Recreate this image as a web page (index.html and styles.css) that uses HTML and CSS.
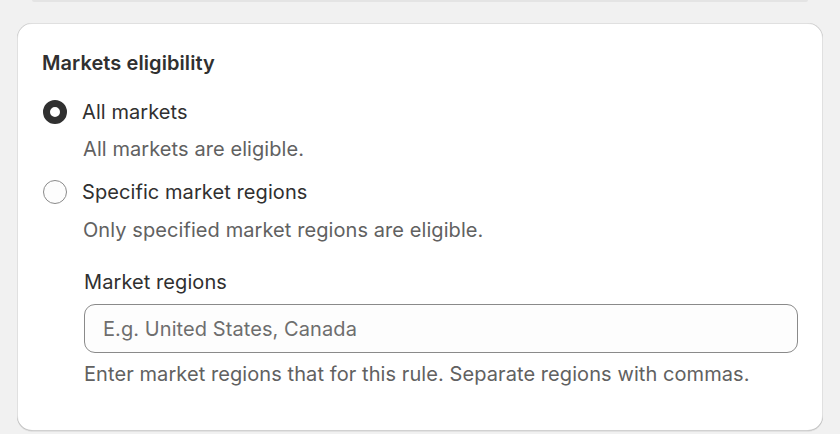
FILE: index.html
```html
<!DOCTYPE html>
<html lang="en">
<head>
<meta charset="utf-8">
<title>Markets eligibility</title>
<link rel="stylesheet" href="styles.css">
</head>
<body>
<div class="prev-edge"></div>
<section class="card">
  <h2 class="card-title">Markets eligibility</h2>
  <div class="choice-list">
    <label class="choice">
      <span class="radio radio-checked"></span>
      <span class="choice-label">All markets</span>
    </label>
    <p class="choice-help">All markets are eligible.</p>
    <label class="choice choice-second">
      <span class="radio"></span>
      <span class="choice-label">Specific market regions</span>
    </label>
    <p class="choice-help choice-help-second">Only specified market regions are eligible.</p>
  </div>
  <div class="field">
    <div class="field-label">Market regions</div>
    <div class="input"><span class="placeholder">E.g. United States, Canada</span></div>
    <p class="field-help">Enter market regions that for this rule. Separate regions with commas.</p>
  </div>
</section>
</body>
</html>
```

FILE: styles.css
```css
* { box-sizing: border-box; }
html, body { margin: 0; padding: 0; }
body {
  background: #f1f1f1;
  font-family: Inter, "Noto Sans", sans-serif;
  font-weight: 400;
  letter-spacing: 0.08px;
  color: #303030;
  width: 840px;
  height: 434px;
  overflow: hidden;
}
.prev-edge {
  height: 2px;
  margin: 0 32px;
  background: #e4e4e4;
  border-radius: 0 0 6px 6px;
}
.card {
  margin: 21px 17px 0;
  height: 408px;
  background: #ffffff;
  border-radius: 15px;
  padding: 26px 25px 0;
  box-shadow:
    0 1px 0 0 rgba(26,26,26,0.07),
    inset 0 -1px 0 0 rgba(0,0,0,0.18),
    inset 1px 0 0 0 rgba(0,0,0,0.12),
    inset -1px 0 0 0 rgba(0,0,0,0.12),
    inset 0 1px 0 0 rgba(204,204,204,0.6);
}
.card-title {
  margin: 0;
  font-size: 20px;
  font-weight: 600;
  line-height: 28px;
  color: #303030;
}
.choice-list {
  margin-top: 21px;
  display: flex;
  flex-direction: column;
}
.choice {
  display: flex;
  align-items: center;
  gap: 15px;
  height: 28px;
  padding-left: 1px;
}
.choice-second { margin-top: 15px; }
.choice-label {
  font-size: 20px;
  line-height: 28px;
  color: #303030;
}
.radio {
  width: 24px;
  height: 24px;
  border-radius: 50%;
  border: 1px solid #8a8a8a;
  background: #fdfdfd;
  flex: none;
}
.radio-checked {
  border: 7.5px solid #303030;
  background: #ffffff;
}
.choice-help {
  margin: 9px 0 0 41px;
  font-size: 20px;
  line-height: 28px;
  color: #616161;
}
.choice-help-second { margin-top: 10px; }
.field {
  margin: 24px 0 0 42px;
  display: flex;
  flex-direction: column;
}
.field-label {
  font-size: 20px;
  line-height: 28px;
  color: #303030;
}
.input {
  margin-top: 8px;
  height: 49px;
  width: 714px;
  border: 1px solid #8a8a8a;
  border-radius: 11px;
  background: #fdfdfd;
  display: flex;
  align-items: center;
  padding-left: 18px;
}
.placeholder {
  font-size: 20px;
  color: #6e6e6e;
}
.field-help {
  margin: 7px 0 0;
  font-size: 20px;
  line-height: 28px;
  color: #616161;
}
```
